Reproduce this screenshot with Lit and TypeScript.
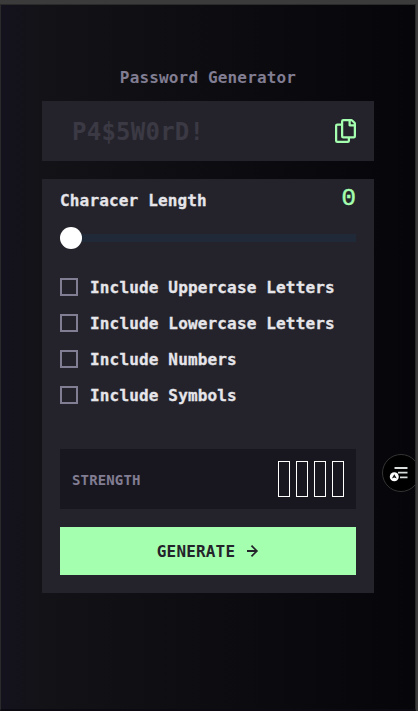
import { LitElement, html, css } from "lit";
import { customElement, property, state } from "lit/decorators.js";

@customElement("check-option")
class CheckOption extends LitElement {
  @property() label = "";

  static styles = css`
    :host { display: flex; align-items: center; gap: 12px; height: 18px; }
    .box { box-sizing: border-box; width: 18px; height: 18px; border: 2px solid #817d92; }
    .label {
      padding-top: 2px;
      font: bold 16px/18px "DejaVu Sans Mono", monospace;
      letter-spacing: 0.16px;
      -webkit-text-stroke: 0.3px #e6e5ea;
      color: #e6e5ea;
      white-space: nowrap;
    }
  `;

  render() {
    return html`<span class="box"></span><span class="label">${this.label}</span>`;
  }
}

@customElement("app-root")
class AppRoot extends LitElement {
  @state() private length = 0;
  private options = [
    "Include Uppercase Letters",
    "Include Lowercase Letters",
    "Include Numbers",
    "Include Symbols",
  ];

  static styles = css`
    :host {
      display: block;
      box-sizing: border-box;
      width: 418px;
      height: 711px;
      padding: 4px 2px 0 0;
      background: #3b3b3b;
      font-family: "DejaVu Sans Mono", monospace;
      font-weight: bold;
    }
    .screen {
      position: relative;
      box-sizing: border-box;
      height: 707px;
      overflow: hidden;
      border: 1px solid #2a2a2b;
      border-bottom: 2px solid #0d0910;
      padding: 60px 41px 0;
      background: linear-gradient(90deg, #14121d 0, #131317 42px, #060509 100%);
    }
    .title {
      box-sizing: border-box;
      margin: 0;
      padding-top: 3px;
      height: 36px;
      font-size: 16px;
      line-height: 20px;
      letter-spacing: 0.16px;
      text-align: center;
      color: #817d92;
    }
    .card { width: 332px; box-sizing: border-box; background: #24232b; }
    .password {
      display: flex;
      align-items: center;
      justify-content: space-between;
      height: 60px;
      padding: 0 18px 0 30px;
      font-size: 24px;
      letter-spacing: 0.24px;
      color: #3b3944;
    }
    .placeholder { padding-top: 2px; }
    .copy { display: block; width: 21px; height: 24px; fill: #a4ffaf; }
    .settings { height: 414px; margin-top: 18px; padding: 0 18px; overflow: hidden; }
    .row {
      display: flex;
      justify-content: space-between;
      height: 48px;
      font-size: 16px;
      line-height: 44px;
      letter-spacing: 0.16px;
      -webkit-text-stroke: 0.3px #e6e5ea;
      color: #e6e5ea;
    }
    .count {
      font: 400 24px/40px "Liberation Mono", monospace;
      letter-spacing: 0;
      -webkit-text-stroke: 0.5px #a4ffaf;
      color: #a4ffaf;
    }
    .slider { display: flex; align-items: center; height: 22px; }
    .thumb { z-index: 1; width: 22px; height: 22px; border-radius: 50%; background: #fff; }
    .track { flex: 1; height: 8px; margin-left: -2px; background: #1f2937; }
    .options { display: flex; flex-direction: column; gap: 18px; margin-top: 29px; }
    .strength {
      display: flex;
      align-items: center;
      justify-content: space-between;
      height: 60px;
      margin-top: 45px;
      padding: 0 12px;
      background: #18171f;
      font-size: 14px;
      line-height: 20px;
      letter-spacing: 0.14px;
      color: #817d92;
    }
    .strength-label { padding-top: 2px; }
    .bars { display: flex; gap: 6px; }
    .bar { box-sizing: border-box; width: 12px; height: 36px; border: 1px solid #fff; }
    .generate {
      display: flex;
      align-items: center;
      justify-content: center;
      gap: 12px;
      width: 100%;
      height: 48px;
      margin-top: 18px;
      padding: 0;
      border: 0;
      background: #a4ffaf;
      font: bold 16px/20px "DejaVu Sans Mono", monospace;
      letter-spacing: 0.16px;
      color: #24232b;
    }
    .generate-label { padding-top: 2px; }
    .arrow { width: 12px; height: 12px; fill: #24232b; }
    .floating {
      position: absolute;
      left: 381px;
      top: 449px;
      width: 38px;
      height: 38px;
    }
  `;

  render() {
    return html`
      <div class="screen">
        <h1 class="title">Password Generator</h1>
        <div class="card password">
          <span class="placeholder">P4$5W0rD!</span>
          <svg class="copy" viewBox="0 0 21 24">
            <path d="M20.341 3.091 17.909.659A2.25 2.25 0 0 0 16.319 0H8.25A2.25 2.25 0 0 0 6 2.25V4.5H2.25A2.25 2.25 0 0 0 0 6.75v15A2.25 2.25 0 0 0 2.25 24h10.5A2.25 2.25 0 0 0 15 21.75V19.5h3.75A2.25 2.25 0 0 0 21 17.25V4.682a2.25 2.25 0 0 0-.659-1.591ZM12.469 21.75H2.53a.281.281 0 0 1-.281-.281V7.03a.281.281 0 0 1 .281-.281H6v10.5a2.25 2.25 0 0 0 2.25 2.25h4.5v1.969a.282.282 0 0 1-.281.281Zm6-4.5H8.53a.281.281 0 0 1-.281-.281V2.53a.281.281 0 0 1 .281-.281H13.5v4.125c0 .621.504 1.125 1.125 1.125h4.125v9.469a.282.282 0 0 1-.281.281Zm.281-12h-3v-3h.451c.075 0 .147.03.2.082L18.667 4.6a.283.283 0 0 1 .082.199v.451Z"/>
          </svg>
        </div>
        <div class="card settings">
          <div class="row">
            <span>Characer Length</span>
            <span class="count">${this.length}</span>
          </div>
          <div class="slider"><span class="thumb"></span><span class="track"></span></div>
          <div class="options">
            ${this.options.map((o) => html`<check-option .label=${o}></check-option>`)}
          </div>
          <div class="strength">
            <span class="strength-label">STRENGTH</span>
            <div class="bars">${[0, 1, 2, 3].map(() => html`<span class="bar"></span>`)}</div>
          </div>
          <button class="generate">
            <span class="generate-label">GENERATE</span>
            <svg class="arrow" viewBox="0 0 12 12">
              <path d="m5.106 12 6-6-6-6-1.265 1.265 3.841 3.84H.001v1.79h7.681l-3.841 3.84z"/>
            </svg>
          </button>
        </div>
        <svg class="floating" viewBox="0 0 38 38">
          <circle cx="19" cy="19" r="18.5" fill="#000" stroke="#343434"/>
          <path d="M12.5 14h13M16 18.7h9.5M18 23.3h7.5" stroke="#d8dcda" stroke-width="1.8"/>
          <circle cx="12.3" cy="22.7" r="4.5" fill="#fff"/>
          <path d="m12.3 20.2 2.5 4.3-2.5-.9-2.5.9z" fill="#111"/>
        </svg>
      </div>
    `;
  }
}
